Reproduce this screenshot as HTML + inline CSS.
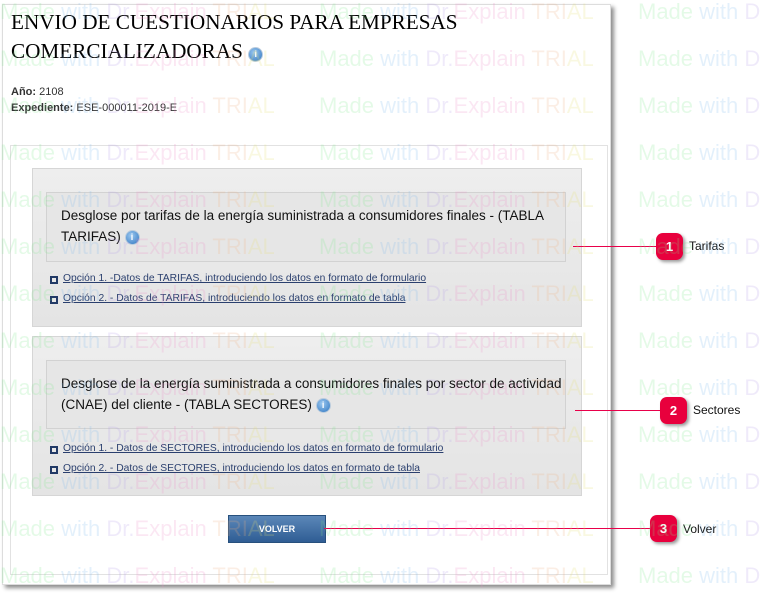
<!DOCTYPE html>
<html><head><meta charset="utf-8"><style>
body{margin:0;width:761px;height:593px;background:#fff;position:relative;overflow:hidden;font-family:"Liberation Sans",sans-serif}
.frame{position:absolute;left:2px;top:4px;width:607px;height:579px;background:#fff;border:1px solid #ddd;box-shadow:3px 3px 4px rgba(0,0,0,.45)}
.abs{position:absolute}
h1{position:absolute;left:11px;top:8px;margin:0;font:normal 21.2px/29px "Liberation Serif",serif;color:#000;width:470px}
.info{display:inline-block;width:13px;height:13px;border-radius:50%;background:radial-gradient(circle at 40% 35%,#9cc8f0,#2f76c0);color:#fff;font:bold 9px/13px "Liberation Sans",sans-serif;text-align:center;vertical-align:1px;border:1px solid #bcd}
.meta{font-size:11px;color:#333;line-height:16px}
.inner{position:absolute;left:10px;top:145px;width:596px;height:428px;border:1px solid #e2e2e2}
.box{position:absolute;left:32px;width:548px;background:linear-gradient(#eee,#e4e4e4);border:1px solid #d6d6d6}
.hd{position:absolute;left:13px;width:520px;border:1px solid #d2d2d2;background:#e6e6e6;font-size:13.5px;line-height:21px;color:#111}
.lk{position:absolute;left:30px;font-size:10.3px;color:#2a3f6e;text-decoration:underline;white-space:nowrap}
.lk:before{content:"";position:absolute;left:-13px;top:3px;width:4px;height:4px;border:2px solid #223a66}
.btn{position:absolute;left:228px;top:515px;width:96px;height:26px;background:linear-gradient(#5b87b8,#2f5d94);border:1px solid #27507d;color:#fff;font:bold 9px/26px "Liberation Sans",sans-serif;text-align:center}
.cl{position:absolute;height:1px;background:#e8004a}
.badge{position:absolute;width:27px;height:27px;border-radius:7px;background:#e8003d;color:#fff;font:bold 13px/27px "Liberation Sans",sans-serif;text-align:center;box-shadow:2px 2px 3px rgba(0,0,0,.4)}
.lbl{position:absolute;font-size:12px;color:#111}
.wm{position:absolute;left:0;top:0;font-size:22px;white-space:pre;line-height:47px;opacity:.2;pointer-events:none}
.wm span.a{color:#7ee88c}.wm span.b{color:#7ab8ee}.wm span.c{color:#b39ce8}.wm span.d{color:#ee8cc8}.wm span.e{color:#f0b080}.wm span.f{color:#e6e070}
</style></head><body>
<div class="frame"></div>
<h1>ENVIO DE CUESTIONARIOS PARA EMPRESAS COMERCIALIZADORAS <span class="info">i</span></h1>
<div class="abs meta" style="left:11px;top:84px"><b>Año:</b> 2108<br><b>Expediente:</b> ESE-000011-2019-E</div>
<div class="inner"></div>
<div class="box" style="top:168px;height:157px">
 <div class="hd" style="top:23px;padding:12px 0 0 14px;box-sizing:border-box;height:70px">Desglose por tarifas de la energía suministrada a consumidores finales - (TABLA TARIFAS) <span class="info">i</span></div>
 <div class="lk" style="top:104px">Opción 1. -Datos de TARIFAS, introduciendo los datos en formato de formulario</div>
 <div class="lk" style="top:124px">Opción 2. - Datos de TARIFAS, introduciendo los datos en formato de tabla</div>
</div>
<div class="box" style="top:336px;height:158px">
 <div class="hd" style="top:23px;padding:12px 0 0 14px;box-sizing:border-box;height:69px">Desglose de la energía suministrada a consumidores finales por sector de actividad (CNAE) del cliente - (TABLA SECTORES) <span class="info">i</span></div>
 <div class="lk" style="top:106px">Opción 1. - Datos de SECTORES, introduciendo los datos en formato de formulario</div>
 <div class="lk" style="top:126px">Opción 2. - Datos de SECTORES, introduciendo los datos en formato de tabla</div>
</div>
<div class="btn">VOLVER</div>
<div class="cl" style="left:573px;top:246px;width:85px"></div>
<div class="badge" style="left:656px;top:233px">1</div><div class="lbl" style="left:689px;top:239px">Tarifas</div>
<div class="cl" style="left:575px;top:410px;width:85px"></div>
<div class="badge" style="left:660px;top:397px">2</div><div class="lbl" style="left:693px;top:403px">Sectores</div>
<div class="cl" style="left:324px;top:528px;width:328px"></div>
<div class="badge" style="left:650px;top:515px">3</div><div class="lbl" style="left:683px;top:522px">Volver</div>
<div class="wm"></div>
<script>
var w=document.querySelector('.wm'),s='';
var unit='<span class="a">Made </span><span class="b">with </span><span class="c">Dr.</span><span class="d">Explain </span><span class="e">TRI</span><span class="f">AL</span>';
for(var r=0;r<13;r++){for(var c=0;c<3;c++){s+='<div style="position:absolute;left:'+(c*319)+'px;top:'+(r*47-12)+'px">'+unit+'</div>';}}
w.innerHTML=s;
</script>
</body></html>
